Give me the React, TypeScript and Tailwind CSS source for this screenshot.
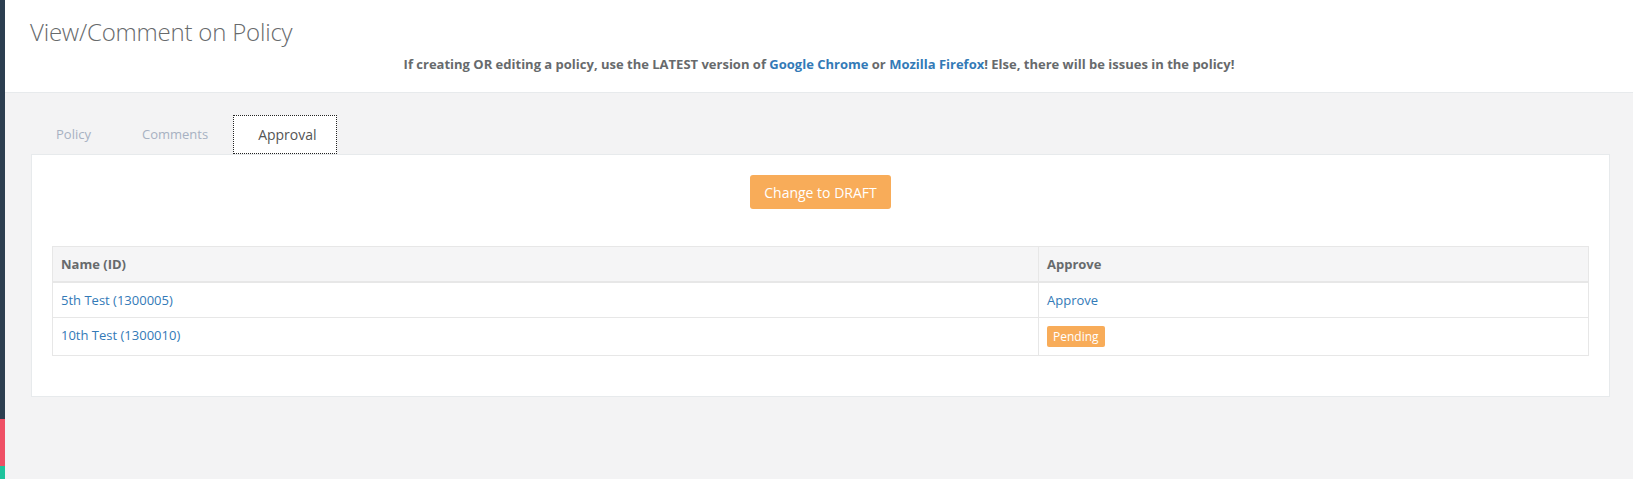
import React from 'react';

const font = { fontFamily: '"Open Sans", "Liberation Sans", sans-serif' };

const rows = [
  { name: '5th Test (1300005)', status: 'approve' },
  { name: '10th Test (1300010)', status: 'pending' },
];

export default function App() {
  return (
    <div className="flex h-[479px] w-full overflow-hidden text-[13px] text-[#676a6c]" style={font}>
      {/* left strip */}
      <div className="flex w-[5px] flex-col">
        <div className="h-[419px] bg-[#2c3e50]" />
        <div className="h-[47px] bg-[#ef5065]" />
        <div className="flex-1 bg-[#1ec39c]" />
      </div>

      <div className="flex-1 bg-[#f3f3f4]">
        <div className="h-[93px] border-b border-[#e7eaec] bg-white pl-[25px] pr-[25px] pt-[16px]">
          <h2 className="text-[24px] font-light leading-[32px] tracking-[-0.2px] text-[#676a6c]">View/Comment on Policy</h2>
          <p className="mt-[7px] text-center font-bold leading-[18px]">
            If creating OR editing a policy, use the LATEST version of{' '}
            <a className="text-[#337ab7]">Google Chrome</a> or{' '}
            <a className="text-[#337ab7]">Mozilla Firefox</a>! Else, there will be issues in the policy!
          </p>
        </div>

        <div className="pl-[26px] pr-[23px] pt-[22px]">
          <ul className="flex">
            <li className="mr-[6px] pb-[10px] pl-[25px] pr-[20px] pt-[10px] leading-[19px] text-[#a7b1c2]">Policy</li>
            <li className="mr-[5px] pb-[10px] pl-[25px] pr-[20px] pt-[10px] leading-[19px] text-[#a7b1c2]">Comments</li>
            <li className="border border-dotted border-[#222] bg-white pb-[9px] pl-[24px] pr-[19px] pt-[9px] text-[14px] leading-[19px] text-[#555]">
              Approval
            </li>
          </ul>

          <div className="border border-[#e7eaec] bg-white p-[20px]">
            <div className="flex justify-center">
              <button className="h-[34px] rounded-[3px] bg-[#f8ac59] px-[14px] text-[14px] text-white">
                Change to DRAFT
              </button>
            </div>

            <table className="mt-[37px] mb-[20px] w-full border-collapse border border-[#e7e7e7]">
              <thead>
                <tr className="bg-[#f5f5f6]">
                  <th className="w-[986px] border border-b-2 border-[#e7e7e7] p-[8px] text-left font-bold leading-[18px]">Name (ID)</th>
                  <th className="border border-b-2 border-[#e7e7e7] p-[8px] text-left font-bold leading-[18px]">Approve</th>
                </tr>
              </thead>
              <tbody>
                {rows.map((r) => (
                  <tr key={r.name}>
                    <td className="border border-[#e7e7e7] p-[8px] align-top leading-[18px] text-[#337ab7]">{r.name}</td>
                    <td className="border border-[#e7e7e7] p-[8px] align-top leading-[18px]">
                      {r.status === 'approve' ? (
                        <a className="text-[#337ab7]">Approve</a>
                      ) : (
                        <span className="inline-block rounded-[2px] bg-[#f8ac59] px-[6px] py-[2px] text-[12px] leading-[17px] text-white">
                          Pending
                        </span>
                      )}
                    </td>
                  </tr>
                ))}
              </tbody>
            </table>
          </div>
        </div>
      </div>
    </div>
  );
}
